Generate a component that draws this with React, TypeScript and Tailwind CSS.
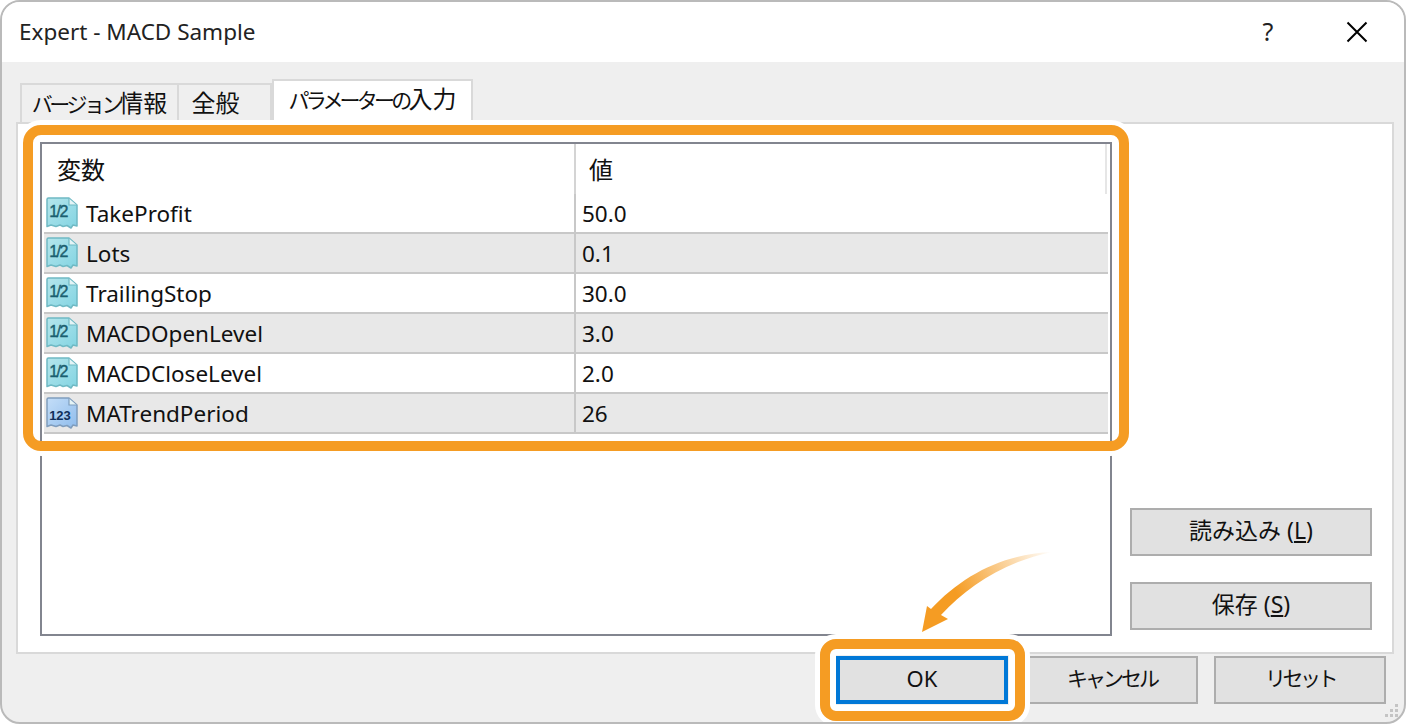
const params = [
  { name: "TakeProfit", value: "50.0", kind: "double" },
  { name: "Lots", value: "0.1", kind: "double" },
  { name: "TrailingStop", value: "30.0", kind: "double" },
  { name: "MACDOpenLevel", value: "3.0", kind: "double" },
  { name: "MACDCloseLevel", value: "2.0", kind: "double" },
  { name: "MATrendPeriod", value: "26", kind: "int" },
];

const font = "font-['Noto_Sans','Noto_Sans_CJK_JP',sans-serif]";

function ParamIcon({ kind }: { kind: string }) {
  const isInt = kind === "int";
  const id = isInt ? "icon-int" : "icon-double";
  return (
    <svg width="32" height="33" viewBox="1 0 32 33" className="shrink-0">
      <defs>
        <linearGradient id={id} x1="0" y1="0" x2="1" y2="1">
          <stop offset="0" stopColor={isInt ? "#c4def8" : "#b6e6ec"} />
          <stop offset="1" stopColor={isInt ? "#8fbcec" : "#82d4e2"} />
        </linearGradient>
      </defs>
      <path
        d="M2 2.500 Q2 1 3.500 1 H24 L32 8 V29 L28 28 L26 31 L22 28.500 L18 29.500 L15 28 L11 29.500 L6 28 L2 29.500 Z"
        fill={`url(#${id})`}
        stroke={isInt ? "#7f9dbd" : "#6fb9c4"}
        strokeWidth="1.500"
        strokeLinejoin="round"
      />
      <path d="M24 1.500 V8 H31.500" fill="#e6f4f6" stroke={isInt ? "#7f9dbd" : "#6fb9c4"} strokeWidth="1.200" />
      <text
        x={isInt ? 15 : 13}
        y={isInt ? 23 : 20}
        textAnchor="middle"
        fontFamily="'Liberation Sans', sans-serif"
        fontWeight={isInt ? 700 : 400}
        fontSize={isInt ? 13 : 16}
        letterSpacing={isInt ? 0 : -1.500}
        fill={isInt ? "#0f2f5c" : "#1b5f70"}
        stroke={isInt ? "none" : "#1b5f70"}
        strokeWidth={isInt ? 0 : 0.400}
      >
        {isInt ? "123" : "1/2"}
      </text>
    </svg>
  );
}

function Button({ children, className }: { children: React.ReactNode; className?: string }) {
  return (
    <div
      className={`flex items-center justify-center pb-[3px] bg-[#e1e1e1] border-2 border-[#adadad] text-[#111] ${className ?? ""}`}
    >
      {children}
    </div>
  );
}

export default function App() {
  return (
    <div className="bg-white w-[1406px] h-[724px]">
      <div className={`relative w-full h-full flex flex-col overflow-hidden rounded-[20px] border-2 border-[#bababa] bg-[#efefef] ${font}`}>
        {/* Title bar */}
        <div className="h-[60px] shrink-0 bg-white flex items-center pl-[17px] text-[#222] text-[22.500px]">
          <span className="flex-1">Expert - MACD Sample</span>
          <span className="w-[16px] text-center text-[25px] mr-[70px]">?</span>
          <svg width="22" height="22" viewBox="0 0 22 22" className="mr-[36px]">
            <path d="M1.500 1.500 L20.500 20.500 M20.500 1.500 L1.500 20.500" stroke="#000" strokeWidth="2" />
          </svg>
        </div>

        {/* Tabs */}
        <div className="h-[60px] shrink-0 flex items-end pl-[18px] text-[#111]">
          <div className="w-[159px] h-[39px] bg-[#efefef] border-2 border-b-0 border-[#d9d9d9] flex items-baseline justify-center">
            <span className="text-[21px] tracking-[-3.400px]">バージョン</span>
            <span className="text-[24px]">情報</span>
          </div>
          <div className="w-[93px] h-[39px] bg-[#efefef] border-2 border-l-0 border-b-0 border-[#d9d9d9] flex items-baseline justify-center pr-[18px] text-[24px]">
            全般
          </div>
          <div className="w-[201px] h-[43px] bg-white border-2 border-b-0 border-[#d9d9d9] flex items-baseline justify-center">
            <span className="text-[21px] tracking-[-3.800px]">パラメーターの</span>
            <span className="text-[24px]">入力</span>
          </div>
        </div>

        {/* Panel */}
        <div className="h-[532px] shrink-0 ml-[14px] mr-[10px] bg-white border-2 border-[#d9d9d9] flex pl-[22px] pt-[18px]">
          <div className="w-[1072px] h-[494px] border-2 border-[#82858f] shrink-0 text-[#111] text-[22.500px]">
            <div className="h-[50px] mr-[3px] flex items-center border-r-2 border-[#e6e6e6] text-[24px]">
              <div className="w-[534px] pl-[15px] h-full flex items-center border-r-2 border-[#d4d4d4] pt-[2px]">変数</div>
              <div className="pl-[13px] pt-[2px]">値</div>
            </div>
            <div className="pl-[2px] pr-[2px]">
              {params.map((p, i) => (
                <div
                  key={p.name}
                  className={`h-[40px] flex items-center border-b-2 border-[#c8c8c8] ${i % 2 === 1 ? "bg-[#e8e8e8]" : "bg-white"}`}
                >
                  <div className="w-[532px] h-full flex items-center pl-[2px] border-r-2 border-[#c8c8c8]">
                    <ParamIcon kind={p.kind} />
                    <span className="ml-[8px] pt-[1px]">{p.name}</span>
                  </div>
                  <span className="ml-[6px] pt-[1px]">{p.value}</span>
                </div>
              ))}
            </div>
          </div>
          <div className="ml-[18px] h-[488px] flex flex-col justify-end gap-[26px] text-[23px]">
            <Button className="w-[242px] h-[48px]">
              <span>
                読み込み&nbsp;(<span className="underline">L</span>)
              </span>
            </Button>
            <Button className="w-[242px] h-[48px]">
              <span>
                保存&nbsp;(<span className="underline">S</span>)
              </span>
            </Button>
          </div>
        </div>

        {/* Bottom buttons */}
        <div className="pt-[2px] pr-[18px] flex justify-end text-[21px]">
          <div className="relative mr-[18px]">
            <Button className="w-[172px] h-[48px] !border-4 !border-[#0078d7] text-[22px]">OK</Button>
            <div className="absolute -left-[16px] -right-[17px] -top-[17px] -bottom-[17px] rounded-[16px] border-[10px] border-[#f59c23] shadow-[0_0_0_5px_#ffffff,inset_0_0_0_6px_#ffffff]" />
          </div>
          <Button className="w-[172px] h-[48px] mr-[16px] tracking-[-3px]">キャンセル</Button>
          <Button className="w-[172px] h-[48px] tracking-[-3.500px]">リセット</Button>
        </div>

        {/* Table highlight */}
        <div className="absolute left-[21px] top-[123px] w-[1106px] h-[326px] rounded-[18px] border-[10px] border-[#f59c23] shadow-[0_0_0_5px_#ffffff]" />

        {/* Arrow to OK */}
        <svg className="absolute left-[898px] top-[538px]" width="170" height="110" viewBox="900 540 170 110">
          <defs>
            <linearGradient id="arrow-fade" gradientUnits="userSpaceOnUse" x1="1052" y1="552" x2="960" y2="600">
              <stop offset="0" stopColor="#f59c23" stopOpacity="0" />
              <stop offset="1" stopColor="#f59c23" />
            </linearGradient>
          </defs>
          <path
            d="M1052 552 C1002 554 962 576 931 609 L927 606 L922 632 L948 619 L941 615 C968 586 1004 562 1052 552 Z"
            fill="url(#arrow-fade)"
          />
        </svg>

        {/* Resize grip */}
        <svg className="absolute right-[4px] bottom-[3px]" width="16" height="16" viewBox="0 0 16 16" fill="#c4c4c4">
          <rect x="11" y="1" width="3" height="3" />
          <rect x="6" y="6" width="3" height="3" />
          <rect x="11" y="6" width="3" height="3" />
          <rect x="1" y="11" width="3" height="3" />
          <rect x="6" y="11" width="3" height="3" />
          <rect x="11" y="11" width="3" height="3" />
        </svg>
      </div>
    </div>
  );
}
